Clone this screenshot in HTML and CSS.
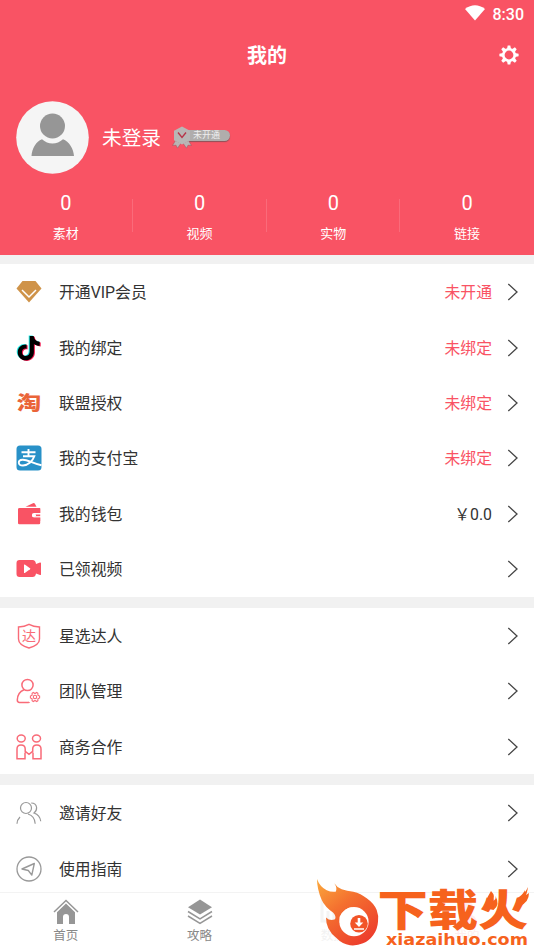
FILE: index.html
```html
<!DOCTYPE html>
<html lang="zh-CN">
<head>
<meta charset="utf-8">
<title>我的</title>
<link rel="stylesheet" href="styles.css">
</head>
<body>
<svg class="defs" width="0" height="0">
  <defs>
    <symbol id="chevron" viewBox="0 0 12 18"><path d="M1.300 1l8.700 8-8.700 8" fill="none" stroke="#444" stroke-width="1.300"/></symbol>
    <path id="note" d="M13.700 1h4c.3 3.300 2.300 5.400 6 5.700v4c-2.300 0-4.300-.7-5.800-1.800v8c0 5-3.700 8.300-8.200 8.300-4.600 0-8-3.500-8-7.800 0-4.900 4-8.300 8.900-7.800v4.100c-2.800-.5-4.700 1.100-4.700 3.500 0 2.200 1.600 3.800 3.800 3.800 2.500 0 4-1.700 4-4.400z"/>
  </defs>
</svg>
<div class="screen">
  <header class="header">
    <div class="status">
      <svg width="20" height="16" viewBox="0 0 20 16"><path d="M0 4Q10-3.500 20 4L10 15.500z" fill="#fff"/></svg>
      <span>8:30</span>
    </div>
    <div class="titlebar">
      <h1>我的</h1>
      <svg class="gear" width="20" height="20" viewBox="-10 -10 20 20">
        <g fill="#fff"><path id="tooth" d="M-2-6l.7-3.600h2.600L2-6z"/><use href="#tooth" transform="rotate(45)"/><use href="#tooth" transform="rotate(90)"/><use href="#tooth" transform="rotate(135)"/><use href="#tooth" transform="rotate(180)"/><use href="#tooth" transform="rotate(225)"/><use href="#tooth" transform="rotate(270)"/><use href="#tooth" transform="rotate(315)"/></g>
        <circle r="5.700" fill="none" stroke="#fff" stroke-width="2.600"/>
      </svg>
    </div>
    <div class="profile">
      <svg class="avatar" width="73" height="73" viewBox="0 0 73 73">
        <circle cx="36.500" cy="36.500" r="36.300" fill="#f5f5f5"/>
        <circle cx="36.500" cy="25" r="12.500" fill="#969696"/>
        <path d="M15.500 55c.5-7.500 4.500-14.500 10.500-16.800 6 5.700 15 5.700 21 0 6 2.300 10.500 9.300 11 16.800z" fill="#969696"/>
      </svg>
      <span class="username">未登录</span>
      <span class="badge">
        <svg width="20" height="24" viewBox="0 0 20 24">
          <path d="M3.500 14.500L.5 19.500l3.500-.3 1.500 3 3.500-5zM16.500 14.500l3 5-3.500-.3-1.500 3-3.500-5z" fill="#b9b4b4" stroke="#a14d58" stroke-width=".5"/>
          <path d="M10 .5l8 4.300v9.400l-8 4.300-8-4.300V4.800z" fill="#b8b7b6"/>
          <path d="M6 6.500l4 5 4-5" fill="none" stroke="#b73549" stroke-width="1.400"/>
        </svg>
        <span class="pill">未开通</span>
      </span>
    </div>
    <div class="stats">
      <div class="stat"><b>0</b><span>素材</span></div>
      <div class="stat"><b>0</b><span>视频</span></div>
      <div class="stat"><b>0</b><span>实物</span></div>
      <div class="stat"><b>0</b><span>链接</span></div>
    </div>
  </header>

  <main class="content">
    <section class="group">
      <div class="row">
        <svg class="icon" viewBox="0 0 26 26"><path d="M6.500 2h13L25.500 9.500 13 23.500.5 9.500z" fill="#cf9349"/><path d="M6 11l7 7 7-7" fill="none" stroke="#fff" stroke-width="1.500"/></svg>
        <span class="label">开通VIP会员</span><span class="value">未开通</span><svg class="arrow"><use href="#chevron"/></svg>
      </div>
      <div class="row">
        <svg class="icon" viewBox="0 0 26 26"><use href="#note" fill="#20eee9" transform="translate(-1 -.6)"/><use href="#note" fill="#f2174f" transform="translate(1 .7)"/><use href="#note"/></svg>
        <span class="label">我的绑定</span><span class="value">未绑定</span><svg class="arrow"><use href="#chevron"/></svg>
      </div>
      <div class="row">
        <svg class="icon" viewBox="0 0 26 26"><text class="tao" transform="translate(13 20) scale(1.250 1)" text-anchor="middle">淘</text></svg>
        <span class="label">联盟授权</span><span class="value">未绑定</span><svg class="arrow"><use href="#chevron"/></svg>
      </div>
      <div class="row">
        <svg class="icon" viewBox="0 0 26 26"><rect x=".5" y=".5" width="25" height="25" rx="3.500" fill="#2891c8"/><path d="M5.500 7.300h14M12.500 4v7.500M7 11.300h11.300C16.500 16.500 12 20.500 7 20.500c-5.500 0-5.500-5.500-.5-5.800 5-.3 10 3.800 19 5.600" fill="none" stroke="#fff" stroke-width="1.900"/></svg>
        <span class="label">我的支付宝</span><span class="value">未绑定</span><svg class="arrow"><use href="#chevron"/></svg>
      </div>
      <div class="row">
        <svg class="icon" viewBox="0 0 26 26"><path d="M9.500 5.800l8-3.800 1.300.4 1.700 3.400z" fill="#f95364"/><path d="M3.500 7H23q1.200 0 1.200 1.200V12h-6q-2.300 0-2.300 2.300t2.300 2.300h6V22q0 1.200-1.200 1.200H3.300Q2 23.200 2 22V8.200Q2 7 3.500 7z" fill="#f95364"/><path d="M16.100 12h8.100v4.600h-8.100z" fill="#fff"/><path d="M15 7h9.200v5H18q-2.200 0-2.200 2.300t2.200 2.300h6.200V20H15z" fill="#f95364"/><path d="M18.500 13.500h5.700v1.700h-5.700z" fill="#f95364"/><circle cx="18.500" cy="14.300" r="1.500" fill="#fff"/></svg>
        <span class="label">我的钱包</span><span class="value money">￥0.0</span><svg class="arrow"><use href="#chevron"/></svg>
      </div>
      <div class="row">
        <svg class="icon" viewBox="0 0 26 26"><path d="M3.500 4h13Q19.500 4 20 8l4-1.500q1-.3 1 .8v10.900q0 1.100-1 .8L20 17.500q-.5 3.500-3.500 3.500h-13Q.5 21 .5 18V7q0-3 3-3z" fill="#f95364"/><path d="M8 9v7.500q0 .8.800.4L14 13.300q.7-.5 0-1L8.800 8.600Q8 8.200 8 9z" fill="#fff"/></svg>
        <span class="label">已领视频</span><svg class="arrow"><use href="#chevron"/></svg>
      </div>
    </section>
    <section class="group">
      <div class="row">
        <svg class="icon" viewBox="0 0 26 26"><path d="M13 1.300q4.500 2.400 10.500 2.700v12q0 6-10.500 9Q2.500 22 2.500 16V4Q8.500 3.700 13 1.300z" fill="none" stroke="#f96b78" stroke-width="1.400"/><text class="da" x="13" y="17.500" text-anchor="middle">达</text></svg>
        <span class="label">星选达人</span><svg class="arrow"><use href="#chevron"/></svg>
      </div>
      <div class="row">
        <svg class="icon" viewBox="0 0 26 26"><g fill="none" stroke="#f96b78" stroke-width="1.500"><circle cx="11.500" cy="7" r="5.600"/><path d="M8 11.800Q1.500 14.500 1.300 22q0 2.400 2.200 2.400H12q1.500 0 1.500-.2"/><g stroke-width="1.100"><circle cx="19" cy="19" r="1.700"/><path d="M17.300 14.500l1.700 1 1.700-1 1.200.8v1.800l1.700 1v1.800l-1.700 1v1.800l-1.200.8-1.700-1-1.700 1-1.200-.8v-1.800l-1.700-1v-1.800l1.700-1v-1.800z"/></g></g></svg>
        <span class="label">团队管理</span><svg class="arrow"><use href="#chevron"/></svg>
      </div>
      <div class="row">
        <svg class="icon" viewBox="0 0 26 26"><g fill="none" stroke="#f96b78" stroke-width="1.500"><ellipse cx="5.200" cy="4.500" rx="4" ry="3.400"/><ellipse cx="20.500" cy="4.500" rx="4" ry="3.400"/><path d="M9 18.500V24.700H1V15q0-4 4-4 4.200 0 4.200 4v2.300l3.800 3 3.700-3V15q0-4 4.200-4 4.100 0 4.100 4v9.700h-8v-6.200"/></g></svg>
        <span class="label">商务合作</span><svg class="arrow"><use href="#chevron"/></svg>
      </div>
    </section>
    <section class="group">
      <div class="row">
        <svg class="icon" viewBox="0 0 26 26"><g fill="none" stroke="#999" stroke-width="1.200"><circle cx="10" cy="8" r="5.500"/><path d="M1 23.800q0-3.800 3-6.800M12 14q6.800 2 7.200 9.800M15.200 3Q20 3 20.600 7.500 20.800 11 18 13q6 2 6.700 8.300"/></g></svg>
        <span class="label">邀请好友</span><svg class="arrow"><use href="#chevron"/></svg>
      </div>
      <div class="row">
        <svg class="icon" viewBox="0 0 26 26"><circle cx="13" cy="13" r="12" fill="none" stroke="#999" stroke-width="1.300"/><path d="M18.300 7.500L6 13l6.300 1.500 3.500 4.600z" fill="none" stroke="#999" stroke-width="1.400" stroke-linejoin="round"/></svg>
        <span class="label">使用指南</span><svg class="arrow"><use href="#chevron"/></svg>
      </div>
    </section>
  </main>

  <nav class="tabs">
    <div class="tab"><svg width="26" height="26" viewBox="0 0 26 26"><path d="M1 13L13 1.500 25 13" fill="none" stroke="#969696" stroke-width="1.500"/><path d="M13 4.500l9 8.700V25h-6v-7q0-3-3-3t-3 3v7H4V13.200z" fill="#969696"/></svg><span>首页</span></div>
    <div class="tab"><svg width="26" height="26" viewBox="0 0 26 26"><path d="M13 .5L25 8.300 13 15.500 1 8.300z" fill="#969696"/><path d="M1 12.500l12 7.300 12-7.300M1 17l12 7.300L25 17" fill="none" stroke="#969696" stroke-width="1.500"/></svg><span>攻略</span></div>
    <div class="tab faint"><svg width="26" height="26" viewBox="0 0 26 26"><path d="M2 1v21h22M8 22V12M14 22V5M20 22V9" fill="none" stroke="#999" stroke-width="3"/></svg><span>数据</span></div>
    <div class="tab faint mine"><svg width="26" height="26" viewBox="0 0 26 26"><circle cx="13" cy="8" r="6" fill="#f95364"/><path d="M3 25q0-10 10-10t10 10z" fill="#f95364"/></svg><span>我的</span></div>
  </nav>

  <svg class="watermark" width="217" height="70" viewBox="0 0 217 70">
    <defs><linearGradient id="fire" x1="0" y1="0" x2=".7" y2="1"><stop offset="0" stop-color="#fbaa3d"/><stop offset=".45" stop-color="#f4702f"/><stop offset="1" stop-color="#ed3e2c"/></linearGradient></defs>
    <path d="M0 0Q3 8 9.700 11.300 14 13.300 18.700 12.700 20.500 9 17.300 4.300 20 8.500 24.700 10.300 30 12.300 36.300 12.700 44 14.500 49.700 19.300 57 24.500 59.700 31 62 37 61 42.700 60.500 50 56.300 56 52 62 46 64.300 40 67 33 66.300 25 65 19.700 59.300 14 55 11.300 49.300 9 45 9 38.500 13 42.500 18 40.300 19.500 37 16 33.500 8 28 4.700 21 0 10 0 0z" fill="url(#fire)"/>
    <circle cx="37" cy="42.700" r="14.600" fill="#fff"/>
    <path d="M22.500 38Q27 28 37 28.200q-8 1-11 8-1.500 5-3.300 8z" fill="#fff"/>
    <circle cx="42" cy="44.700" r="8.800" fill="#f25428"/>
    <path d="M40.700 39h2.600v4.500h3L42 48l-4.300-4.500h3zM37 49.300h10v1.400H37z" fill="#fff"/>
    <text class="brand-name" transform="translate(60.500 47) scale(1.170 1)" textLength="129">下载火</text>
    <g fill="#f6621d">
      <path d="M174 12q5 5 1.500 10 4-1 3-5 5 9-2 14-8-1-7.500-8 1-5 5-11z"/>
      <path d="M208 11q-1 5 3-3-1 6-2 8l3-2q0 9-9 13-5-3-3-8 5-2 8-8z"/>
    </g>
    <text class="brand-url" x="69" y="65.500" textLength="142" lengthAdjust="spacingAndGlyphs">xiazaihuo.com</text>
  </svg>
</div>
</body>
</html>
```

FILE: styles.css
```css
* { box-sizing: border-box; }
body {
  margin: 0;
  font-family: Roboto, "Noto Sans CJK SC", sans-serif;
  color: #333;
  background: #fff;
}
.defs { position: absolute; }
.screen {
  position: relative;
  display: flex;
  flex-direction: column;
  height: 949px;
  overflow: hidden;
}
.header {
  flex: none;
  height: 255px;
  background: #f95364;
  color: #fff;
}
.status {
  display: flex;
  justify-content: flex-end;
  align-items: center;
  gap: 8px;
  height: 28px;
  padding-right: 10px;
  font-size: 16px;
  font-weight: 500;
}
.status svg { margin-bottom: 3px; }
.titlebar {
  display: grid;
  grid-template-columns: 1fr auto 1fr;
  align-items: center;
  height: 54px;
  padding: 0 15px;
}
.titlebar h1 {
  grid-column: 2;
  margin: 2px 0 0;
  font-size: 20px;
  line-height: 28px;
  font-weight: 700;
}
.gear { justify-self: end; }
.profile {
  display: flex;
  align-items: center;
  height: 111px;
  padding-left: 16px;
}
.username { margin: 2px 0 0 13px; font-size: 19.700px; line-height: 28px; }
.badge {
  display: flex;
  align-items: center;
  margin-left: 11px;
}
.badge svg { flex: none; position: relative; z-index: 1; }
.pill {
  width: 43px;
  height: 11px;
  margin: 0 0 4px -5px;
  padding-left: 6px;
  border-radius: 0 6px 6px 0;
  background: #b0adac;
  box-shadow: 0 1px 1px #8d5158;
  color: #eee;
  font-size: 9px;
  line-height: 11px;
  white-space: nowrap;
}
.stats { display: grid; grid-template-columns: repeat(4, 1fr); margin-left: -1px; }
.stat {
  position: relative;
  display: flex;
  flex-direction: column;
  align-items: center;
  height: 62px;
}
.stat + .stat::before {
  content: "";
  position: absolute;
  left: -1px;
  top: 6px;
  width: 1px;
  height: 33px;
  background: #fa6b7a;
}
.stat b { font-size: 20px; line-height: 20px; font-weight: 400; }
.stat span { margin-top: 11px; font-size: 13px; line-height: 20px; }
.content {
  flex: 1;
  min-height: 0;
  overflow: hidden;
  padding-top: 9px;
  background: #f1f1f1;
}
.group { background: #fff; margin-bottom: 11px; }
.group:first-child { padding-bottom: .5px; }
.row {
  display: flex;
  align-items: center;
  height: 55.400px;
  padding: 1px 15px 0 16px;
  font-size: 15.850px;
  line-height: 24px;
}
.icon { width: 26px; height: 26px; margin-right: 17px; flex: none; }
.label { flex: 1; padding-top: 2px; }
.value { padding-top: 2px; color: #f95364; }
.money { color: #333; }
.arrow { flex: none; width: 12px; height: 18px; margin-left: 15px; }
.tao { font: 900 19.500px "Noto Sans CJK SC", sans-serif; fill: #ea6439; }
.da { font: 400 14px "Noto Sans CJK SC", sans-serif; fill: #f96b78; }
.tabs {
  flex: none;
  display: grid;
  grid-template-columns: repeat(4, 1fr);
  height: 57px;
  margin-left: -1px;
  border-top: 1px solid #f3f3f3;
  background: #fff;
}
.tab {
  display: flex;
  flex-direction: column;
  align-items: center;
  padding-top: 6px;
  font-size: 12.500px;
  line-height: 18px;
  color: #888;
}
.tab span { margin-top: 2px; }
.faint { opacity: .1; }
.mine { color: #f95364; }
.watermark {
  position: absolute;
  left: 317px;
  top: 879px;
}
.brand-name { font: 900 43px "Noto Sans CJK SC", sans-serif; fill: #f6621d; }
.brand-url { font: 700 15px "DejaVu Sans", sans-serif; fill: #f6621d; }
```
